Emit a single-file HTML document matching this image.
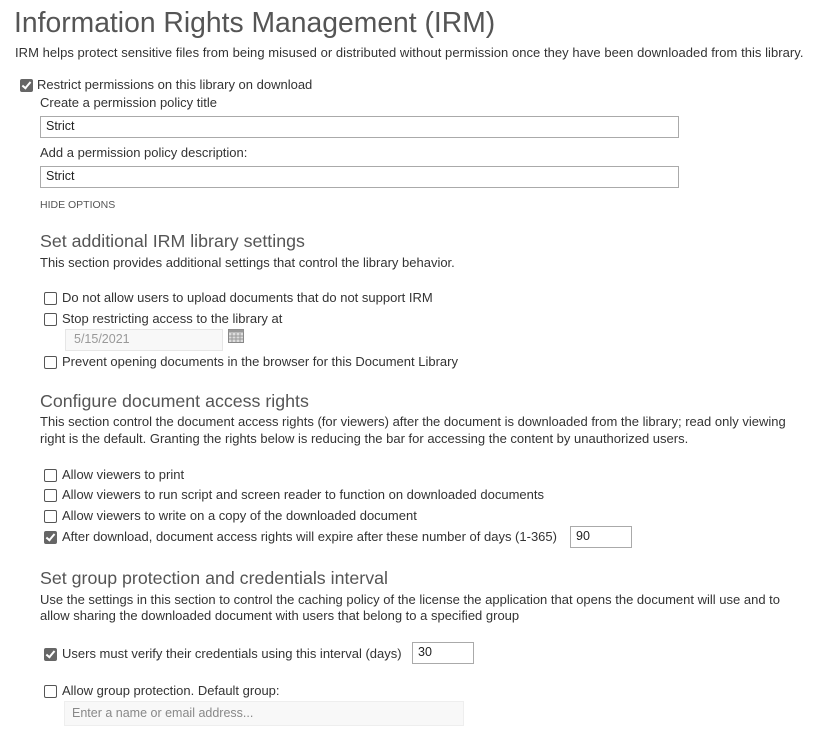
<!DOCTYPE html>
<html><head><style>
body{margin:0;width:827px;height:731px;background:#fff;font-family:"Liberation Sans",sans-serif;color:#333;position:relative;overflow:hidden}
.t{position:absolute;white-space:nowrap;font-size:13px;line-height:16px}
.h1{position:absolute;left:14px;top:6px;font-size:28.3px;font-weight:300;color:#555;white-space:nowrap}
.h2{position:absolute;left:40px;font-size:17.8px;color:#555;white-space:nowrap;line-height:22px}
.cb{position:absolute;width:11px;height:11px;border:1px solid #555;border-radius:2px;background:#fff}
.cb.on{background:#666;border-color:#666}
.cb.on::after{content:"";position:absolute;left:3px;top:0px;width:3px;height:7px;border:solid #fff;border-width:0 2px 2px 0;transform:rotate(40deg)}
.in{position:absolute;border:1px solid #aaa;background:#fff;font-size:12.5px;line-height:19px;padding-left:5px;box-sizing:border-box;color:#222}
</style></head><body>
<div class="h1">Information Rights Management (IRM)</div>
<div class="t" style="left:15px;top:45px;letter-spacing:0.04px">IRM helps protect sensitive files from being misused or distributed without permission once they have been downloaded from this library.</div>

<div class="cb on" style="left:20px;top:79px"></div>
<div class="t" style="left:37px;top:77px">Restrict permissions on this library on download</div>
<div class="t" style="left:40px;top:95px">Create a permission policy title</div>
<div class="in" style="left:40px;top:116px;width:639px;height:22px">Strict</div>
<div class="t" style="left:40px;top:145px">Add a permission policy description:</div>
<div class="in" style="left:40px;top:166px;width:639px;height:22px">Strict</div>
<div class="t" style="left:40px;top:197px;font-size:10.5px;color:#555">HIDE OPTIONS</div>

<div class="h2" style="top:230px">Set additional IRM library settings</div>
<div class="t" style="left:40px;top:255px">This section provides additional settings that control the library behavior.</div>
<div class="cb" style="left:44px;top:292px"></div>
<div class="t" style="left:62px;top:290px">Do not allow users to upload documents that do not support IRM</div>
<div class="cb" style="left:44px;top:313px"></div>
<div class="t" style="left:62px;top:311px">Stop restricting access to the library at</div>
<div class="in" style="left:65px;top:329px;width:158px;height:22px;background:#f8f8f8;border-color:#e6e6e6;color:#999;padding-left:8px">5/15/2021</div>
<svg style="position:absolute;left:228px;top:329px" width="16" height="14"><rect x="0.5" y="0.5" width="15" height="13" fill="#ddd" stroke="#888"/><rect x="0.5" y="0.5" width="15" height="3" fill="#999"/><path d="M4 4V13M8 4V13M12 4V13M1 7H15M1 10H15" stroke="#999" stroke-width="1"/></svg>
<div class="cb" style="left:44px;top:356px"></div>
<div class="t" style="left:62px;top:354px">Prevent opening documents in the browser for this Document Library</div>

<div class="h2" style="top:390px">Configure document access rights</div>
<div class="t" style="left:40px;top:414px">This section control the document access rights (for viewers) after the document is downloaded from the library; read only viewing</div>
<div class="t" style="left:40px;top:431px">right is the default. Granting the rights below is reducing the bar for accessing the content by unauthorized users.</div>
<div class="cb" style="left:44px;top:469px"></div>
<div class="t" style="left:62px;top:467px">Allow viewers to print</div>
<div class="cb" style="left:44px;top:489px"></div>
<div class="t" style="left:62px;top:487px">Allow viewers to run script and screen reader to function on downloaded documents</div>
<div class="cb" style="left:44px;top:510px"></div>
<div class="t" style="left:62px;top:508px">Allow viewers to write on a copy of the downloaded document</div>
<div class="cb on" style="left:44px;top:531px"></div>
<div class="t" style="left:62px;top:529px">After download, document access rights will expire after these number of days (1-365)</div>
<div class="in" style="left:570px;top:526px;width:62px;height:22px">90</div>

<div class="h2" style="top:567px">Set group protection and credentials interval</div>
<div class="t" style="left:40px;top:592px">Use the settings in this section to control the caching policy of the license the application that opens the document will use and to</div>
<div class="t" style="left:40px;top:608px">allow sharing the downloaded document with users that belong to a specified group</div>
<div class="cb on" style="left:44px;top:648px"></div>
<div class="t" style="left:62px;top:646px">Users must verify their credentials using this interval (days)</div>
<div class="in" style="left:412px;top:642px;width:62px;height:22px">30</div>
<div class="cb" style="left:44px;top:685px"></div>
<div class="t" style="left:62px;top:683px">Allow group protection. Default group:</div>
<div class="in" style="left:64px;top:701px;width:400px;height:25px;background:#f8f8f8;border-color:#eee;color:#888;line-height:23px;padding-left:7px">Enter a name or email address...</div>
</body></html>
